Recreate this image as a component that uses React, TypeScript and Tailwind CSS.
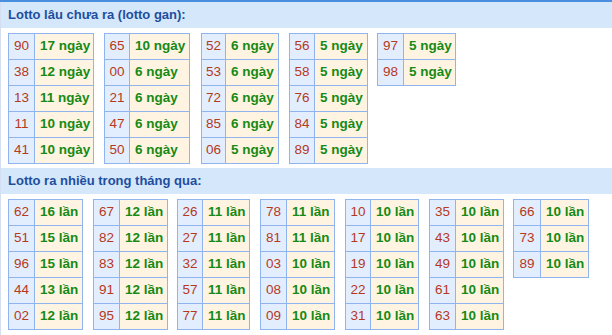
const gan = [
  { ml: "ml-[7px]", num: "w-[26px]", val: "w-[59px]", rows: [["90", "17 ngày"], ["38", "12 ngày"], ["13", "11 ngày"], ["11", "10 ngày"], ["41", "10 ngày"]] },
  { ml: "ml-[10px]", num: "w-[25px]", val: "w-[60px]", rows: [["65", "10 ngày"], ["00", "6 ngày"], ["21", "6 ngày"], ["47", "6 ngày"], ["50", "6 ngày"]] },
  { ml: "ml-[11px]", num: "w-[24px]", val: "w-[53px]", rows: [["52", "6 ngày"], ["53", "6 ngày"], ["72", "6 ngày"], ["85", "6 ngày"], ["06", "5 ngày"]] },
  { ml: "ml-[10px]", num: "w-[25px]", val: "w-[53px]", rows: [["56", "5 ngày"], ["58", "5 ngày"], ["76", "5 ngày"], ["84", "5 ngày"], ["89", "5 ngày"]] },
  { ml: "ml-[9px]", num: "w-[26px]", val: "w-[52px]", rows: [["97", "5 ngày"], ["98", "5 ngày"]] },
];

const nhieu = [
  { ml: "ml-[7px]", num: "w-[26px]", val: "w-[48px]", rows: [["62", "16 lần"], ["51", "15 lần"], ["96", "15 lần"], ["44", "13 lần"], ["02", "12 lần"]] },
  { ml: "ml-[10px]", num: "w-[26px]", val: "w-[48px]", rows: [["67", "12 lần"], ["82", "12 lần"], ["83", "12 lần"], ["91", "12 lần"], ["95", "12 lần"]] },
  { ml: "ml-[9px]", num: "w-[25px]", val: "w-[47px]", rows: [["26", "11 lần"], ["27", "11 lần"], ["32", "11 lần"], ["57", "11 lần"], ["77", "11 lần"]] },
  { ml: "ml-[10px]", num: "w-[26px]", val: "w-[48px]", rows: [["78", "11 lần"], ["81", "11 lần"], ["03", "10 lần"], ["08", "10 lần"], ["09", "10 lần"]] },
  { ml: "ml-[10px]", num: "w-[25px]", val: "w-[48px]", rows: [["10", "10 lần"], ["17", "10 lần"], ["19", "10 lần"], ["22", "10 lần"], ["31", "10 lần"]] },
  { ml: "ml-[10px]", num: "w-[26px]", val: "w-[48px]", rows: [["35", "10 lần"], ["43", "10 lần"], ["49", "10 lần"], ["61", "10 lần"], ["63", "10 lần"]] },
  { ml: "ml-[9px]", num: "w-[27px]", val: "w-[48px]", rows: [["66", "10 lần"], ["73", "10 lần"], ["89", "10 lần"]] },
];

type Block = { ml: string; num: string; val: string; rows: string[][] };

function NumTable({ t }: { t: Block }) {
  return (
    <div className={`${t.ml} self-start border-t border-l border-[#8fb4ee]`}>
      {t.rows.map(([n, v]) => (
        <div key={n} className="flex h-[26px] text-[13.5px]">
          <div className={`${t.num} flex items-center justify-center border-r border-b border-[#8fb4ee] bg-[#e2eefd] text-[#b5391d]`}>{n}</div>
          <div className={`${t.val} flex items-center border-r border-b border-[#8fb4ee] bg-[#fff4e2] pl-[5px] font-bold text-[#168a16]`}>{v}</div>
        </div>
      ))}
    </div>
  );
}

function Heading({ children }: { children: string }) {
  return (
    <div className="flex h-[26px] items-center bg-[#d5e7fb] pl-[7px] text-[13px] font-bold text-[#1d4f9e]">{children}</div>
  );
}

export default function App() {
  return (
    <div className="h-[335px] w-[612px] overflow-hidden bg-white text-[13px]" style={{ fontFamily: '"Liberation Sans", Arial, sans-serif' }}>
      <div className="border-t-2 border-[#4a8fdf]" />
      <div className="border-l border-[#d3def0] h-[333px]">
        <Heading>Lotto lâu chưa ra (lotto gan):</Heading>
        <div className="mt-[5px] flex">
          {gan.map((t, i) => (
            <NumTable key={i} t={t} />
          ))}
        </div>
        <div className="mt-[4px]">
          <Heading>Lotto ra nhiều trong tháng qua:</Heading>
        </div>
        <div className="mt-[5px] flex">
          {nhieu.map((t, i) => (
            <NumTable key={i} t={t} />
          ))}
        </div>
      </div>
    </div>
  );
}
